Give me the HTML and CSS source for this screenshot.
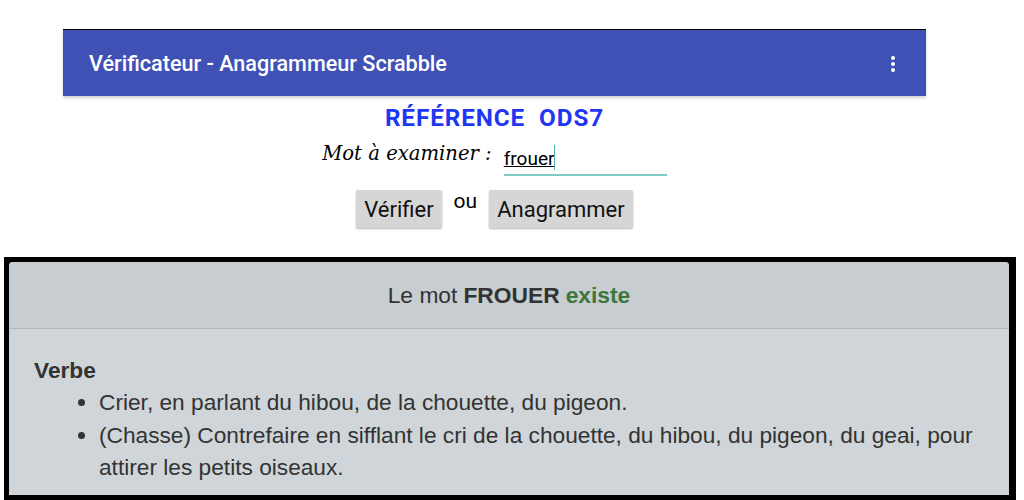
FILE: index.html
```html
<!DOCTYPE html>
<html lang="fr">
<head>
<meta charset="utf-8">
<link rel="stylesheet" href="styles.css">
</head>
<body>
<div class="app">
  <header class="appbar">
    <span class="appbar-title">Vérificateur - Anagrammeur Scrabble</span>
    <svg class="menu" width="6" height="18" viewBox="0 0 6 18"><circle cx="3" cy="3" r="2" fill="#fff"/><circle cx="3" cy="9" r="2" fill="#fff"/><circle cx="3" cy="15" r="2" fill="#fff"/></svg>
  </header>
  <h1 class="ref">RÉFÉRENCE&nbsp; ODS7</h1>
  <div class="field-row">
    <label class="field-label">Mot à examiner :</label>
    <div class="input"><span class="typed">frouer</span><span class="caret"></span></div>
  </div>
  <div class="btn-row">
    <button class="btn">Vérifier</button>
    <span class="ou">ou</span>
    <button class="btn">Anagrammer</button>
  </div>
</div>
<div class="frame">
  <div class="card">
    <div class="card-head">Le mot <b>FROUER</b> <b class="ok">existe</b></div>
    <div class="card-body">
      <div class="pos">Verbe</div>
      <ul class="defs">
        <li>Crier, en parlant du hibou, de la chouette, du pigeon.</li>
        <li>(Chasse) Contrefaire en sifflant le cri de la chouette, du hibou, du pigeon, du geai, pour attirer les petits oiseaux.</li>
      </ul>
    </div>
  </div>
</div>
</body>
</html>
```

FILE: styles.css
```css
html, body { margin: 0; padding: 0; background: #fff; }
body { width: 1024px; height: 500px; overflow: hidden; position: relative; font-family: Roboto, "Liberation Sans", sans-serif; }

.app { margin-left: 63px; width: 863px; padding-top: 29px; }

.appbar {
  height: 67px;
  box-sizing: border-box;
  border-top: 1px solid #000;
  background: #3f51b5;
  display: flex;
  align-items: center;
  justify-content: space-between;
  padding: 1px 30px 0 26px;
  box-shadow: 0 2px 3px rgba(0,0,0,0.18);
}
.appbar-title { color: #fff; font-size: 21.6px; font-weight: 500; letter-spacing: 0; }
.menu { display: block; }

.ref {
  margin: 7px 0 0;
  text-align: center;
  font-size: 24.3px;
  font-weight: 700;
  color: #1f36f5;
  letter-spacing: 0.9px;
  line-height: 30px;
}

.field-row {
  display: flex;
  justify-content: center;
  align-items: flex-start;
  gap: 12px;
  margin-top: 5px;
}
.field-label {
  font-family: "DejaVu Serif", serif;
  font-style: italic;
  font-size: 19.6px;
  line-height: 24px;
  color: #000;
  padding-top: 4px;
}
.input {
  width: 163px;
  height: 38px;
  border-bottom: 2px solid #80cbc4;
  display: flex;
  align-items: flex-end;
  padding-bottom: 4px;
  box-sizing: border-box;
}
.typed { font-size: 19px; text-decoration: underline; color: #000; line-height: 22px; }
.caret { width: 1px; height: 25px; background: #4db6ac; }

.btn-row {
  display: flex;
  justify-content: center;
  align-items: flex-start;
  gap: 12px;
  margin-top: 14px;
}
.btn {
  font-family: Roboto, sans-serif;
  font-size: 22px;
  color: #111;
  background: #d6d6d6;
  border: none;
  border-radius: 2px;
  height: 38px;
  padding: 0 8px;
  box-shadow: 0 1px 2px rgba(0,0,0,0.3);
}
.ou { font-size: 21px; line-height: 22px; color: #000; }

.frame {
  position: absolute;
  left: 4px; top: 257px;
  width: 1012px; height: 243px;
  box-sizing: border-box;
  background: #000;
  padding: 5px 7px 5px 5px;
}
.card {
  height: 100%;
  background: #cfd5d8;
  border-radius: 4px 4px 0 0;
  overflow: hidden;
  font-family: "Liberation Sans", Arial, sans-serif;
  color: #333;
}
.card-head {
  height: 67px;
  background: #c7cdd0;
  border-bottom: 1px solid #b0b6b9;
  display: flex;
  align-items: center;
  justify-content: center;
  font-size: 22.8px;
  color: #333;
  box-sizing: border-box;
}
.card-head b { margin: 0 6px; }
.card-head .ok { color: #3c763d; margin: 0; }
.card-body { padding: 28px 25px 0; font-size: 22.7px; line-height: 32.5px; }
.pos { font-weight: 700; line-height: 26px; margin-bottom: 3px; }
.defs { margin: 0; padding-left: 65px; }
.defs li { line-height: 32.5px; }
```
